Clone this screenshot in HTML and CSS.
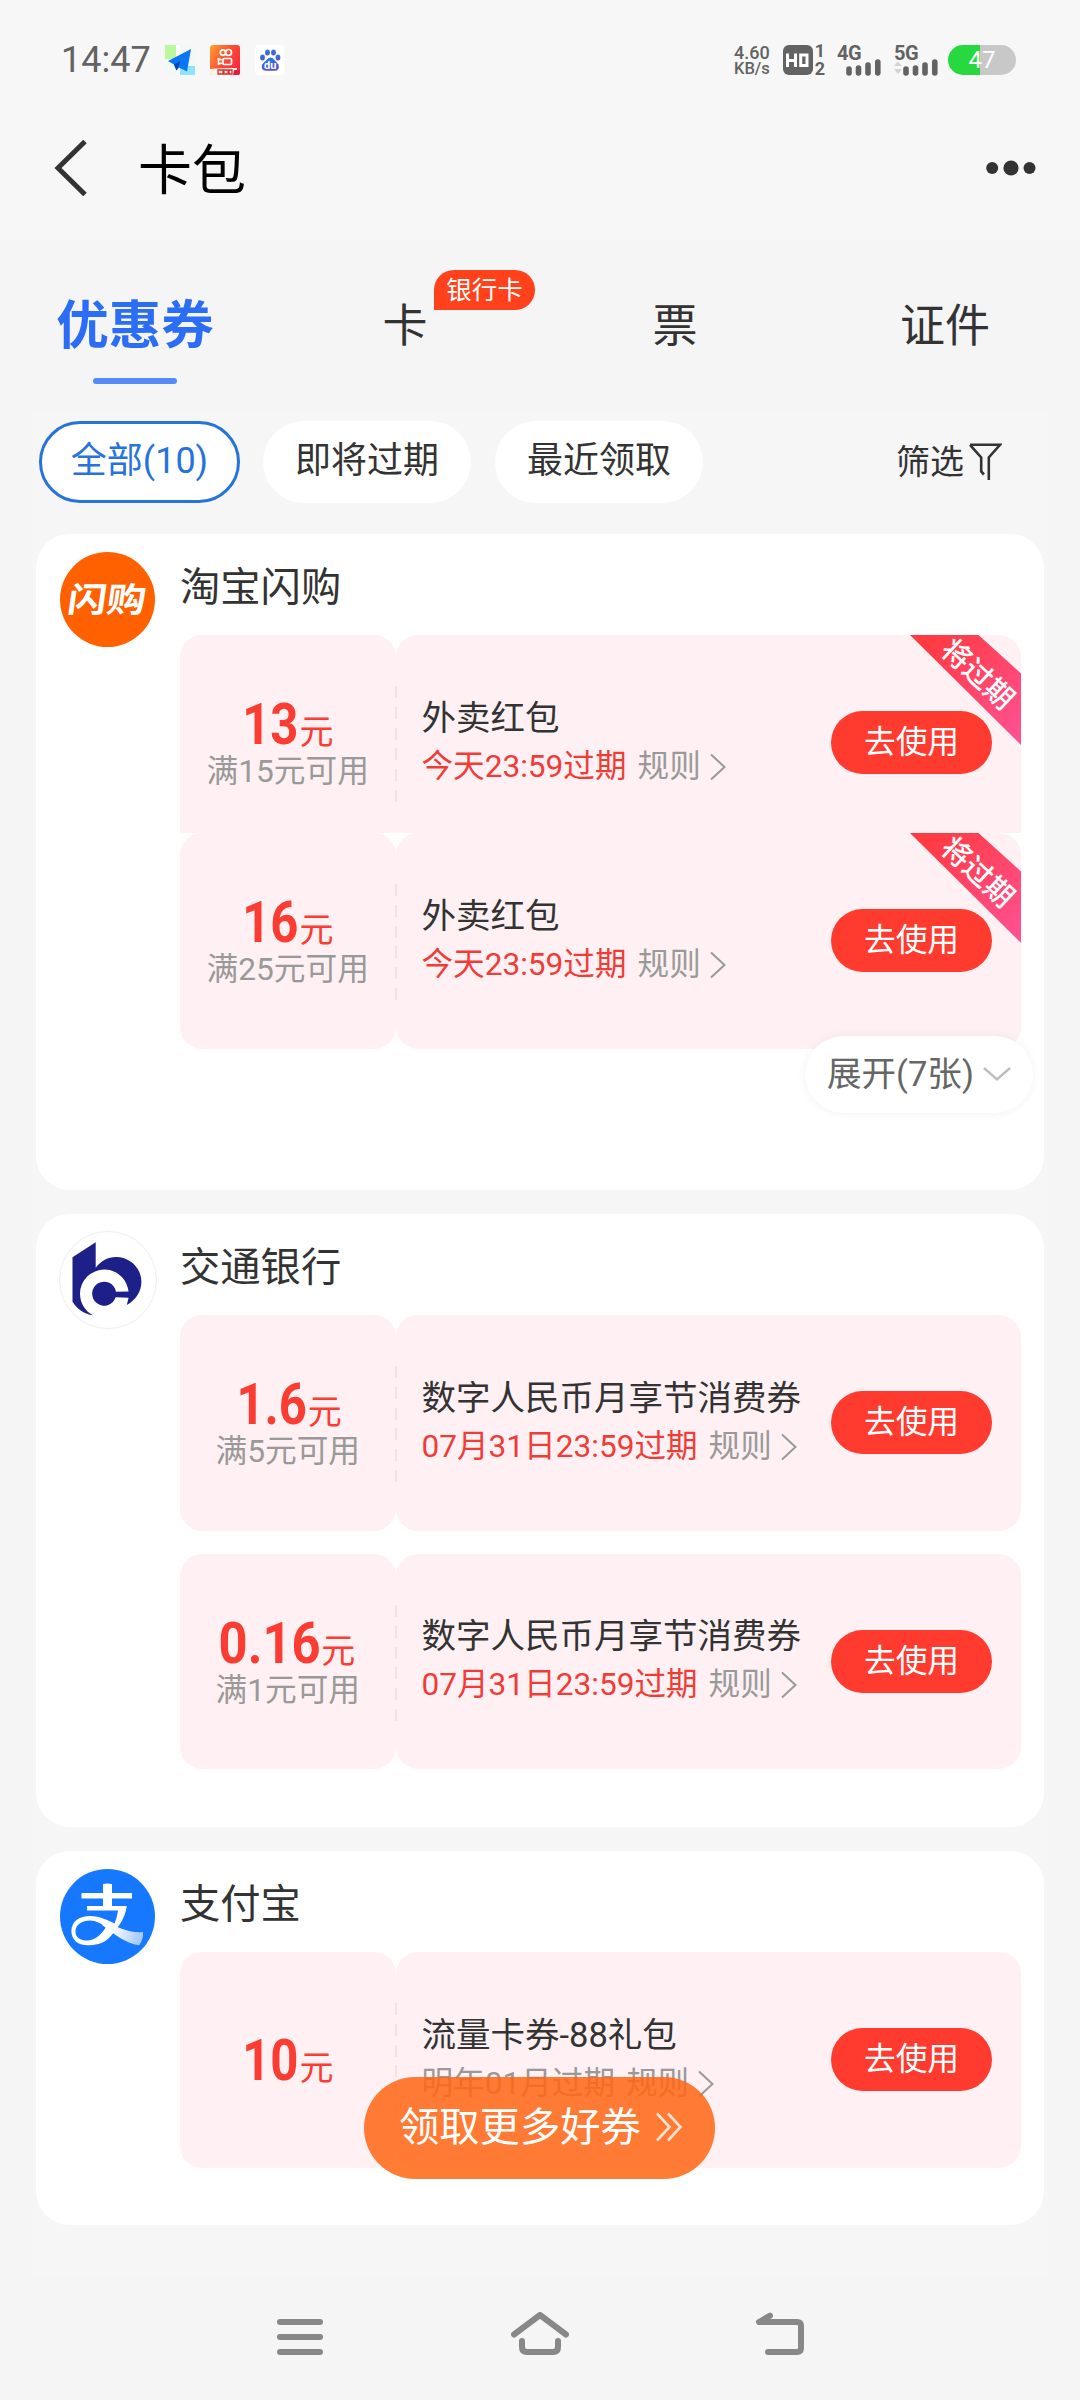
FILE: index.html
```
<!DOCTYPE html>
<html lang="zh-CN">
<head>
<meta charset="utf-8">
<title>卡包</title>
<link rel="stylesheet" href="styles.css">
</head>
<body>
<svg class="defs" aria-hidden="true">
  <defs>
    <linearGradient id="ribbonFill" x1="0" y1="0" x2="1" y2="1">
      <stop offset="0.1" stop-color="#ff3a40"/>
      <stop offset="1" stop-color="#ff5296"/>
    </linearGradient>
    <linearGradient id="ksFill" x1="0" y1="0" x2="1" y2="0.6">
      <stop offset="0" stop-color="#ffa02c"/>
      <stop offset="0.6" stop-color="#fb4a33"/>
      <stop offset="1" stop-color="#fb2a3c"/>
    </linearGradient>
    <linearGradient id="tailFill" x1="0" y1="0" x2="1" y2="0.2">
      <stop offset="0.3" stop-color="#ffffff"/>
      <stop offset="1" stop-color="#a9cbff"/>
    </linearGradient>
    <linearGradient id="pawFill" x1="0" y1="0" x2="0.3" y2="1">
      <stop offset="0" stop-color="#1f86f0"/>
      <stop offset="1" stop-color="#5a4fd0"/>
    </linearGradient>
  </defs>
  <symbol id="chevron" viewBox="0 0 16 28"><path d="M1 1.5 14.5 14 1 26.5" fill="none" stroke="currentColor" stroke-width="2"/></symbol>
</svg>

<header class="top">
  <div class="status">
    <span class="clock">14:47</span>
    <svg class="app" viewBox="0 0 30 30"><rect width="30" height="30" rx="3" fill="#f2f8f8"/><path d="M0 0H11V14H0Z" fill="#bdf79d"/><path d="M11 0H15V14H11ZM11 21H15V30H11Z" fill="#fff"/><path d="M15 21H30V30H15Z" fill="#8ee4fb"/><path d="M26 4 3 16 9 19.500 11.500 25.500 14 22.500 22 26.500Z" fill="#0a76f5"/><path d="M15 16 9 19.500 11.500 25.500 14 21Z" fill="#0747b5"/></svg>
    <svg class="app" viewBox="0 0 30 30"><rect width="30" height="30" rx="3" fill="url(#ksFill)"/><g fill="none" stroke="#fff" stroke-width="1.700"><circle cx="13" cy="7.500" r="2.700"/><circle cx="18.500" cy="7.500" r="3"/><rect x="13" y="13.500" width="8.500" height="6" rx="1"/><path d="M12 15 8.500 14V19L12 18"/></g><path d="M0 24Q12 22.500 27 23V30H2Q0 30 0 28Z" fill="#fff3e8"/><path d="M8 25H13V29H8ZM14 25H18V29H14ZM19 25H22V29H19Z" fill="none" stroke="#e02a2a" stroke-width="1.300"/><path d="M24 25H30V28Q30 30 28 30H23Z" fill="#e01f3c"/></svg>
    <svg class="app" viewBox="0 0 30 30"><rect width="30" height="30" rx="4" fill="#fff"/><g fill="url(#pawFill)"><ellipse cx="7.500" cy="12.500" rx="2.400" ry="3"/><ellipse cx="12.500" cy="7.600" rx="2.400" ry="3"/><ellipse cx="18.500" cy="7.600" rx="2.400" ry="3"/><ellipse cx="23" cy="12.500" rx="2.400" ry="3"/><path d="M15.500 12.500Q18 12.500 20 15.500L23.500 19.500Q25 25.500 20 25.700H11Q5.500 25.500 7 19.500L11 15.500Q13 12.500 15.500 12.500Z"/></g><text class="du" x="15.300" y="23.500" text-anchor="middle">du</text></svg>
    <span class="spacer"></span>
    <span class="speed"><b>4.60</b><b>KB/s</b></span>
    <span class="hd">
      <svg viewBox="0 0 30 30"><rect width="30" height="30" rx="6" fill="#636363"/><path d="M4.500 8.500V22M12.500 8.500V22M4.500 15.500H12.500" stroke="#fff" stroke-width="3" fill="none"/><path d="M17.700 10H24V20.500H17.700Z" stroke="#fff" stroke-width="3" fill="none"/></svg>
      <span class="sims"><b>1</b><b>2</b></span>
    </span>
    <svg class="signal" viewBox="0 0 46 30"><text class="net" x="0" y="15">4G</text><path d="M12 24V28M21.500 23V28M31 20V28M40.800 17V28" stroke="#636363" stroke-width="5.600" stroke-linecap="round"/></svg>
    <svg class="signal" viewBox="0 0 46 30"><text class="net" x="0" y="15">5G</text><path d="M0 21 4 16.500 8 21ZM0 24 4 29 8 24Z" fill="#d2d2d2"/><path d="M12 24V28M21.500 23V28M31 20V28M40.800 17V28" stroke="#636363" stroke-width="5.600" stroke-linecap="round"/></svg>
    <span class="battery">47</span>
  </div>
  <div class="appbar">
    <svg class="back" viewBox="0 0 34 56"><path d="M31 1.500 4 28 31 54.500" fill="none" stroke="#333" stroke-width="5"/></svg>
    <h1>卡包</h1>
    <svg class="more" viewBox="0 0 50 16"><circle cx="6.200" cy="8" r="6"/><circle cx="25" cy="8" r="7.600"/><circle cx="43.500" cy="8" r="6"/></svg>
  </div>
</header>

<nav class="tabs">
  <div class="tab active">优惠券</div>
  <div class="tab">卡<span class="badge">银行卡</span></div>
  <div class="tab">票</div>
  <div class="tab">证件</div>
</nav>

<main class="panel">
  <div class="filters">
    <span class="pill on">全部(10)</span>
    <span class="pill">即将过期</span>
    <span class="pill">最近领取</span>
    <span class="sort">筛选<svg viewBox="0 0 34 38"><path d="M2 1.800H32L20.800 14.500V37M2 1.800 13.200 14.500V28.500L16 31.500" fill="none" stroke="#333" stroke-width="2.600"/></svg></span>
  </div>

  <section class="card card-stack">
    <div class="logo logo-orange"><span>闪购</span></div>
    <div class="body">
      <h2>淘宝闪购</h2>
      <div class="coupon clipped">
        <div class="value"><p class="amount"><b>13</b>元</p><p class="cond">满15元可用</p></div>
        <div class="info"><div><p class="title">外卖红包</p><p class="meta"><em>今天23:59过期</em>规则<svg><use href="#chevron"/></svg></p></div><a class="use">去使用</a></div>
        <svg class="ribbon" viewBox="0 0 111 110"><path d="M0 0H68.500L111 38.500V110Z" fill="url(#ribbonFill)"/><text transform="translate(68 39) rotate(43)" text-anchor="middle" dy="10.500">将过期</text></svg>
      </div>
      <div class="coupon">
        <div class="value"><p class="amount"><b>16</b>元</p><p class="cond">满25元可用</p></div>
        <div class="info"><div><p class="title">外卖红包</p><p class="meta"><em>今天23:59过期</em>规则<svg><use href="#chevron"/></svg></p></div><a class="use">去使用</a></div>
        <svg class="ribbon" viewBox="0 0 111 110"><path d="M0 0H68.500L111 38.500V110Z" fill="url(#ribbonFill)"/><text transform="translate(68 39) rotate(43)" text-anchor="middle" dy="10.500">将过期</text></svg>
      </div>
      <div class="expand">展开(7张)<svg viewBox="0 0 28 16"><path d="M1 2 14 13.500 27 2" fill="none" stroke="#bdbdbd" stroke-width="2.400"/></svg></div>
    </div>
  </section>

  <section class="card card-bank">
    <div class="logo logo-bank"><svg viewBox="0 0 98 98"><path d="M13.500 26.300 36.700 11.300V36.700C42 30 49 26 57 26C71 26 82.400 37 82.400 51C82.400 60 77 69 67.800 74L69.600 66.700 56.600 66.300A12 12 0 1 1 57 60.800L69.600 60.500C68 48 58 38.600 45.300 38.600A24.200 24.200 0 0 0 21 62.500C21 72 26 80 33.900 84.300C25 83 17 77 13.500 70.700Z" fill="#1d2088"/></svg></div>
    <div class="body">
      <h2>交通银行</h2>
      <div class="coupon">
        <div class="value"><p class="amount"><b>1.6</b>元</p><p class="cond">满5元可用</p></div>
        <div class="info"><div><p class="title">数字人民币月享节消费券</p><p class="meta"><em>07月31日23:59过期</em>规则<svg><use href="#chevron"/></svg></p></div><a class="use">去使用</a></div>
      </div>
      <div class="coupon spaced">
        <div class="value"><p class="amount amount-long"><b>0.16</b>元</p><p class="cond">满1元可用</p></div>
        <div class="info"><div><p class="title">数字人民币月享节消费券</p><p class="meta"><em>07月31日23:59过期</em>规则<svg><use href="#chevron"/></svg></p></div><a class="use">去使用</a></div>
      </div>
    </div>
  </section>

  <section class="card card-pay">
    <div class="logo logo-pay"><svg viewBox="0 0 95 95"><path d="M21.500 24H43V15Q47 14 52 15V24H72V29.500H52V37H66.800C65 51 56 61 49 69C43 75 34 76.300 28 76.300C17 76.300 11.400 70 11.400 62C11.400 52 20 47 30 47C40 47 48 51.500 54.500 54.500Q57 49 58 41.500H27V37H43V29.500H21.500ZM46 58C41 54.500 36 51.500 30 51.500C22 51.500 15.500 55.500 15.500 62.500C15.500 69 21 71.500 27 71.500C35 71.500 41 66 46 58Z" fill="#fff" fill-rule="evenodd"/><path d="M44 51C56 58 70 64.500 83 63C83.500 68 82 73 79 76.300C65 74 54 65 42 56Z" fill="url(#tailFill)"/></svg></div>
    <div class="body">
      <h2>支付宝</h2>
      <div class="coupon">
        <div class="value"><p class="amount"><b>10</b>元</p></div>
        <div class="info"><div><p class="title">流量卡券-88礼包</p><p class="meta"><em class="muted">明年01月过期</em>规则<svg><use href="#chevron"/></svg></p></div><a class="use">去使用</a></div>
      </div>
    </div>
  </section>
</main>

<a class="cta">领取更多好券<svg viewBox="0 0 28 30"><path d="M2 1.500 14.500 15 2 28.500M13 1.500 25.500 15 13 28.500" fill="none" stroke="#ffe3d2" stroke-width="2.600"/></svg></a>

<footer class="sysnav">
  <svg viewBox="0 0 60 50"><path d="M10 10H50M10 25H50M10 40H50"/></svg>
  <svg viewBox="0 0 60 50"><path d="M4 22.500 30 3 56 22.500M12 29V35Q12 40 17 40H43Q48 40 48 35V29"/></svg>
  <svg viewBox="0 0 60 50"><path d="M20 3.700 9 10H47Q51 10 51 14V36Q51 40 47 40H18"/></svg>
</footer>
</body>
</html>
```
FILE: styles.css
```
* { box-sizing: border-box; margin: 0; padding: 0; }
body {
  position: relative;
  width: 1080px;
  height: 2400px;
  overflow: hidden;
  background: #f5f5f5;
  color: #333;
  font-family: Roboto, "Noto Sans CJK SC", sans-serif;
}
.defs { position: absolute; width: 0; height: 0; }
svg { display: block; flex: none; }
em { font-style: normal; }

/* Header */
.top { height: 240px; background: #f7f7f7; }
.status {
  display: flex;
  align-items: center;
  height: 120px;
  padding: 0 64px 0 61px;
}
.clock { width: 104px; color: #636363; font-size: 36px; line-height: 42px; }
.app { width: 30px; height: 30px; margin-right: 15px; }
.du { fill: #fff; font-size: 11px; font-weight: 700; }
.spacer { flex: 1; }
.speed {
  display: flex;
  flex-direction: column;
  width: 49px;
  padding-top: 1px;
  color: #636363;
  font-size: 18px;
  line-height: 16px;
}
.speed b { font-weight: 500; }
.speed b + b { font-size: 16.500px; }
.hd { display: flex; width: 44px; margin-right: 10px; }
.hd svg { width: 30px; height: 30px; }
.sims {
  display: flex;
  flex-direction: column;
  align-items: center;
  width: 14px;
  margin: -3px 0;
  color: #636363;
  font-size: 18px;
  line-height: 18px;
}
.signal { width: 46px; height: 30px; margin-right: 11px; overflow: visible; }
.signal + .signal { margin-right: 8px; }
.net { fill: #636363; font: 700 20px Roboto, sans-serif; letter-spacing: -0.500px; }
.battery {
  width: 68px;
  height: 30px;
  border-radius: 15px;
  background: linear-gradient(90deg, #27d83f 32px, #c8c8c8 32px);
  color: #fff;
  font-size: 24px;
  line-height: 30px;
  text-align: center;
}
.appbar {
  display: flex;
  align-items: center;
  height: 96px;
  padding: 0 44px 0 54px;
}
.back { width: 34px; height: 56px; }
.appbar h1 {
  flex: 1;
  padding: 8px 0 0 50px;
  color: #000;
  font-size: 54px;
  font-weight: 400;
  line-height: 64px;
}
.more { width: 50px; height: 16px; fill: #333; }

/* Category tabs */
.tabs { display: grid; grid-template-columns: repeat(4, 1fr); height: 171px; }
.tab {
  position: relative;
  padding-top: 57px;
  font-size: 45px;
  line-height: 60px;
  text-align: center;
}
.tab.active { padding-top: 56px; color: #2b6ef5; font-size: 52.500px; font-weight: 700; }
.tab.active::after {
  content: "";
  display: block;
  width: 84px;
  height: 6px;
  margin: 22px auto 0;
  border-radius: 3px;
  background: #548bf6;
}
.badge {
  position: absolute;
  left: 164px;
  top: 30px;
  width: 101px;
  height: 40px;
  border-radius: 20px 20px 20px 0;
  background: #ff411c;
  color: #fff;
  font-size: 25.500px;
  line-height: 40px;
}

/* Filter row */
.panel {
  display: flex;
  flex-direction: column;
  gap: 24px;
  height: 1866px;
  margin: 0 32px 0 33px;
  padding: 10px 4px 0 3px;
  background: #f6f6f6;
}
.filters {
  display: flex;
  align-items: center;
  gap: 24px;
  height: 82px;
  margin-bottom: 7px;
  padding-left: 3px;
  padding-right: 42px;
}
.pill {
  width: 208px;
  height: 82px;
  border-radius: 41px;
  background: #fff;
  font-size: 36px;
  line-height: 81px;
  text-align: center;
}
.pill.on { width: 201px; margin-right: -1px; border: 3px solid #2673dc; color: #2673dc; line-height: 75px; }
.sort {
  display: flex;
  align-items: center;
  gap: 4px;
  margin-left: auto;
  font-size: 34px;
  line-height: 84px;
}
.sort svg { width: 34px; height: 38px; }

/* Merchant cards */
.card {
  display: flex;
  flex: none;
  padding: 18px 23px 0 24px;
  border-radius: 34px;
  background: #fff;
}
.card-stack { height: 656px; }
.card-bank { height: 613px; }
.card-pay { height: 374px; }
.logo { flex: none; width: 95px; height: 95px; border-radius: 50%; }
.logo-orange {
  display: flex;
  align-items: center;
  justify-content: center;
  background: #ff6000;
  color: #fff;
}
.logo-orange span { font-size: 38px; font-weight: 700; line-height: 40px; transform: skewX(-8deg) scale(1.030, 0.900); }
.logo-bank { width: 98px; height: 98px; margin: -1px -2px 0 -1px; border: 1px solid #eee; }
.logo-bank svg { width: 98px; height: 98px; margin: -1px 0 0 -1px; }
.logo-pay { background: #1677ff; }
.body { flex: 1; margin-left: 25px; min-width: 0; }
.body h2 { padding-top: 6px; height: 83px; font-size: 40.300px; font-weight: 400; line-height: 60px; }

/* Coupons */
.coupon { position: relative; display: flex; height: 215.500px; }
.coupon.clipped { height: 198px; overflow: hidden; }
.coupon.spaced { margin-top: 23px; }
.value, .info { height: 215.500px; border-radius: 22px; background: #fff1f3; }
.value {
  display: flex;
  flex-direction: column;
  justify-content: center;
  align-items: center;
  width: 215.500px;
}
.amount {
  display: flex;
  align-items: baseline;
  margin: 10px 0 -8px;
  color: #fa3c32;
  font-size: 34px;
  line-height: 50px;
}
.amount:last-child { margin-bottom: 0; }
.amount b {
  margin-left: -0.160em;
  margin-right: 1px;
  font-size: 57px;
  font-weight: 700;
  transform: scaleX(0.860);
  transform-origin: right center;
}
.amount-long b { margin-left: -0.260em; transform: scaleX(0.890); }
.cond { color: #999; font-size: 31.700px; line-height: 46px; }
.info {
  position: relative;
  display: flex;
  flex: 1;
  align-items: center;
  justify-content: space-between;
  padding: 0 29px 0 26px;
}
.info::before {
  content: "";
  position: absolute;
  left: -1px;
  top: 51px;
  width: 2px;
  height: 116px;
  background: repeating-linear-gradient(#f0e2e5 0 12px, transparent 12px 20.800px);
}
.title { font-size: 34.500px; line-height: 48px; white-space: nowrap; }
.meta {
  display: flex;
  align-items: center;
  color: #999;
  font-size: 31.600px;
  line-height: 50px;
  white-space: nowrap;
}
.meta em { margin-right: 11px; color: #f03c37; }
.meta em.muted { color: #999; }
.meta svg { width: 16px; height: 28px; margin-left: 9px; }
.use {
  width: 161px;
  height: 63px;
  border-radius: 32px;
  background: #ff3b2f;
  color: #fff;
  font-size: 31.700px;
  line-height: 64px;
  text-align: center;
}
.ribbon { position: absolute; right: 0; top: 0; width: 111px; height: 110px; }
.ribbon text { fill: #fff; font: 500 29px Roboto, "Noto Sans CJK SC", sans-serif; }
.expand {
  position: relative;
  display: flex;
  align-items: center;
  justify-content: center;
  gap: 9px;
  width: 228px;
  height: 77px;
  margin: -13px -12px 0 auto;
  padding-bottom: 6px;
  border-radius: 39px;
  background: #fff;
  box-shadow: 0 0 10px rgba(0, 0, 0, 0.060);
  color: #666;
  font-size: 34.560px;
}
.expand svg { width: 28px; height: 16px; margin-top: 5px; }

/* Floating action */
.cta {
  position: absolute;
  left: 364px;
  top: 2077px;
  display: flex;
  align-items: center;
  gap: 14px;
  width: 351px;
  height: 102px;
  padding: 0 0 9px 35px;
  border-radius: 51px;
  background: rgba(255, 103, 20, 0.860);
  color: #fff;
  font-size: 40.300px;
}
.cta svg { width: 28px; height: 30px; margin-top: 6px; }

/* System navigation */
.sysnav {
  display: flex;
  justify-content: center;
  gap: 180px;
  padding-top: 35px;
}
.sysnav svg {
  width: 60px;
  height: 50px;
  fill: none;
  stroke: #888;
  stroke-width: 6;
  stroke-linecap: round;
  stroke-linejoin: round;
}
```
